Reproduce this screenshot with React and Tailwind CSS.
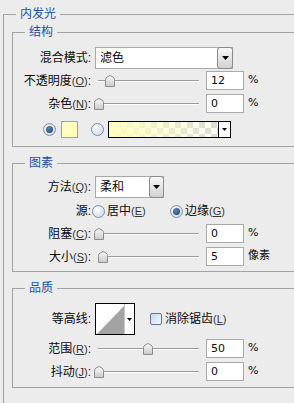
import React from "react";

const Mn = ({ k }) => (
  <span className="text-[11px] text-[#333]">
    (<span className="underline">{k}</span>)
  </span>
);

const Label = ({ children }) => (
  <div className="w-[78px] shrink-0 text-right whitespace-nowrap">{children}:</div>
);

const Arrow = () => (
  <svg width="7" height="4" viewBox="0 0 7 4">
    <path d="M0 0 H7 L3.5 4 Z" fill="#000" />
  </svg>
);

function Slider({ pct }) {
  return (
    <div className="relative w-[104px] h-[14px] ml-[4px]">
      <div className="absolute left-[3px] right-0 top-[6px] h-[2px] border-t border-[#9c9c9c] border-b border-b-white" />
      <svg
        className="absolute top-[1px]"
        style={{ left: pct * 0.99 - 1.5 }}
        width="10"
        height="12"
        viewBox="0 0 10 12"
      >
        <defs>
          <linearGradient id="th" x1="0" y1="0" x2="0" y2="1">
            <stop offset="0" stopColor="#fafafa" />
            <stop offset="1" stopColor="#c9c9c9" />
          </linearGradient>
        </defs>
        <path d="M0.5 11.5 V4.5 Q0.5 3 2 2 L5 0.5 L8 2 Q9.5 3 9.5 4.5 V11.5 Z" fill="url(#th)" stroke="#8c8c8c" />
      </svg>
    </div>
  );
}

const NumInput = ({ value }) => (
  <div className="ml-[7px] w-[38px] h-[19px] bg-white border border-[#a9a9a9] pl-[4px] leading-[17px] font-['DejaVu_Sans',sans-serif] text-[11px]">
    {value}
  </div>
);

function SliderRow({ label, pct, value, unit, className }) {
  return (
    <div className={"flex items-center h-[19px] " + className}>
      <Label>{label}</Label>
      <Slider pct={pct} />
      <NumInput value={value} />
      <span className="ml-[4px] font-['DejaVu_Sans','Noto_Sans_CJK_SC',sans-serif] text-[11px]">{unit}</span>
    </div>
  );
}

const Radio = ({ checked }) => (
  <div className="w-[13px] h-[13px] shrink-0 rounded-full border border-[#7d8fa6] bg-[radial-gradient(circle_at_35%_35%,#ffffff,#c3d1e1)] flex items-center justify-center">
    {checked && <div className="w-[7px] h-[7px] rounded-full bg-[radial-gradient(circle_at_40%_35%,#5f86b8,#1c3d6e)]" />}
  </div>
);

const Group = ({ title, className, children }) => (
  <fieldset className={"border border-[#a3a3a3] w-[320px] ml-[8px] " + className}>
    <legend className="ml-[12px] px-[4px] text-[#1f4fa6] leading-[14px]">{title}</legend>
    {children}
  </fieldset>
);

export default function App() {
  return (
    <div className="w-[294px] h-[403px] overflow-hidden bg-[#ececec] text-[12px] text-[#0a0a0a] font-['Liberation_Sans','Noto_Sans_CJK_SC',sans-serif]">
      <fieldset className="ml-[3px] mt-[7px] w-[340px] border border-[#a3a3a3] pb-[40px]">
        <legend className="ml-[12px] px-[4px] text-[#1f4fa6] leading-[14px]">内发光</legend>

        <Group title="结构" className="mt-[4px] pb-[8px]">
          <div className="flex items-center h-[22px] mt-[8px]">
            <Label>混合模式</Label>
            <div className="ml-[4px] w-[138px] h-[22px] flex bg-white border border-[#a9a9a9]">
              <div className="flex-1 pl-[4px] leading-[20px]">滤色</div>
              <div className="w-[16px] h-[22px] -mt-[1px] -mr-[1px] rounded-[3px] border border-[#8b8b8b] bg-[linear-gradient(#f7f7f7,#d2d2d2)] flex items-center justify-center">
                <Arrow />
              </div>
            </div>
          </div>
          <SliderRow label={<>不透明度<Mn k="O" /></>} pct={12} value="12" unit="%" className="mt-[2px]" />
          <SliderRow label={<>杂色<Mn k="N" /></>} pct={0} value="0" unit="%" className="mt-[4px]" />
          <div className="flex items-center h-[17px] mt-[8px] pl-[30px]">
            <Radio checked />
            <div className="ml-[5px] w-[17px] h-[17px] bg-[#ffffbe] border border-[#a0a0a0]" />
            <div className="ml-[13px]"><Radio /></div>
            <div className="ml-[4px] w-[123px] h-[17px] flex border border-black bg-[image:linear-gradient(to_right,#ffffbe,#ffffbe00),repeating-conic-gradient(#d9d9d9_0_25%,#ffffff_0_50%)] bg-[length:100%_100%,12px_12px]">
              <div className="flex-1" />
              <div className="w-[12px] h-full bg-white border-l border-black flex items-center justify-center">
                <svg width="5" height="3" viewBox="0 0 5 3"><path d="M0 0 H5 L2.5 3 Z" fill="#000" /></svg>
              </div>
            </div>
          </div>
        </Group>

        <Group title="图素" className="mt-[9px] pb-[5px]">
          <div className="flex items-center h-[22px] mt-[6px]">
            <Label>方法<Mn k="Q" /></Label>
            <div className="ml-[4px] w-[69px] h-[22px] flex bg-white border border-[#a9a9a9]">
              <div className="flex-1 pl-[4px] leading-[20px]">柔和</div>
              <div className="w-[15px] h-[22px] -mt-[1px] -mr-[1px] rounded-[3px] border border-[#8b8b8b] bg-[linear-gradient(#f7f7f7,#d2d2d2)] flex items-center justify-center">
                <Arrow />
              </div>
            </div>
          </div>
          <div className="flex items-center h-[16px] mt-[5px]">
            <Label>源</Label>
            <div className="ml-[1px] w-[78px] flex items-center">
              <Radio />
              <span className="ml-[2px] whitespace-nowrap">居中<Mn k="E" /></span>
            </div>
            <Radio checked />
            <span className="ml-[2px] whitespace-nowrap">边缘<Mn k="G" /></span>
          </div>
          <SliderRow label={<>阻塞<Mn k="C" /></>} pct={0} value="0" unit="%" className="mt-[5px]" />
          <SliderRow label={<>大小<Mn k="S" /></>} pct={5} value="5" unit="像素" className="mt-[4px]" />
        </Group>

        <Group title="品质" className="mt-[9px] pb-[6px]">
          <div className="flex items-center h-[32px] mt-[8px]">
            <Label>等高线</Label>
            <div className="ml-[4px] w-[40px] h-[32px] flex bg-white border border-black">
              <svg width="28" height="30" viewBox="0 0 28 30">
                <polygon points="1,30 28,2 28,30" fill="#a3a3a3" />
              </svg>
              <div className="flex-1 border-l border-[#c8c8c8] flex items-center justify-center">
                <svg width="5" height="3" viewBox="0 0 5 3"><path d="M0 0 H5 L2.5 3 Z" fill="#000" /></svg>
              </div>
            </div>
            <div className="ml-[15px] w-[12px] h-[12px] rounded-[2px] border border-[#5a7596] bg-[linear-gradient(135deg,#c9d8ea,#f4f8fc)]" />
            <span className="ml-[3px] whitespace-nowrap">消除锯齿<Mn k="L" /></span>
          </div>
          <SliderRow label={<>范围<Mn k="R" /></>} pct={50} value="50" unit="%" className="mt-[4px]" />
          <SliderRow label={<>抖动<Mn k="J" /></>} pct={0} value="0" unit="%" className="mt-[4px]" />
        </Group>
      </fieldset>
    </div>
  );
}
